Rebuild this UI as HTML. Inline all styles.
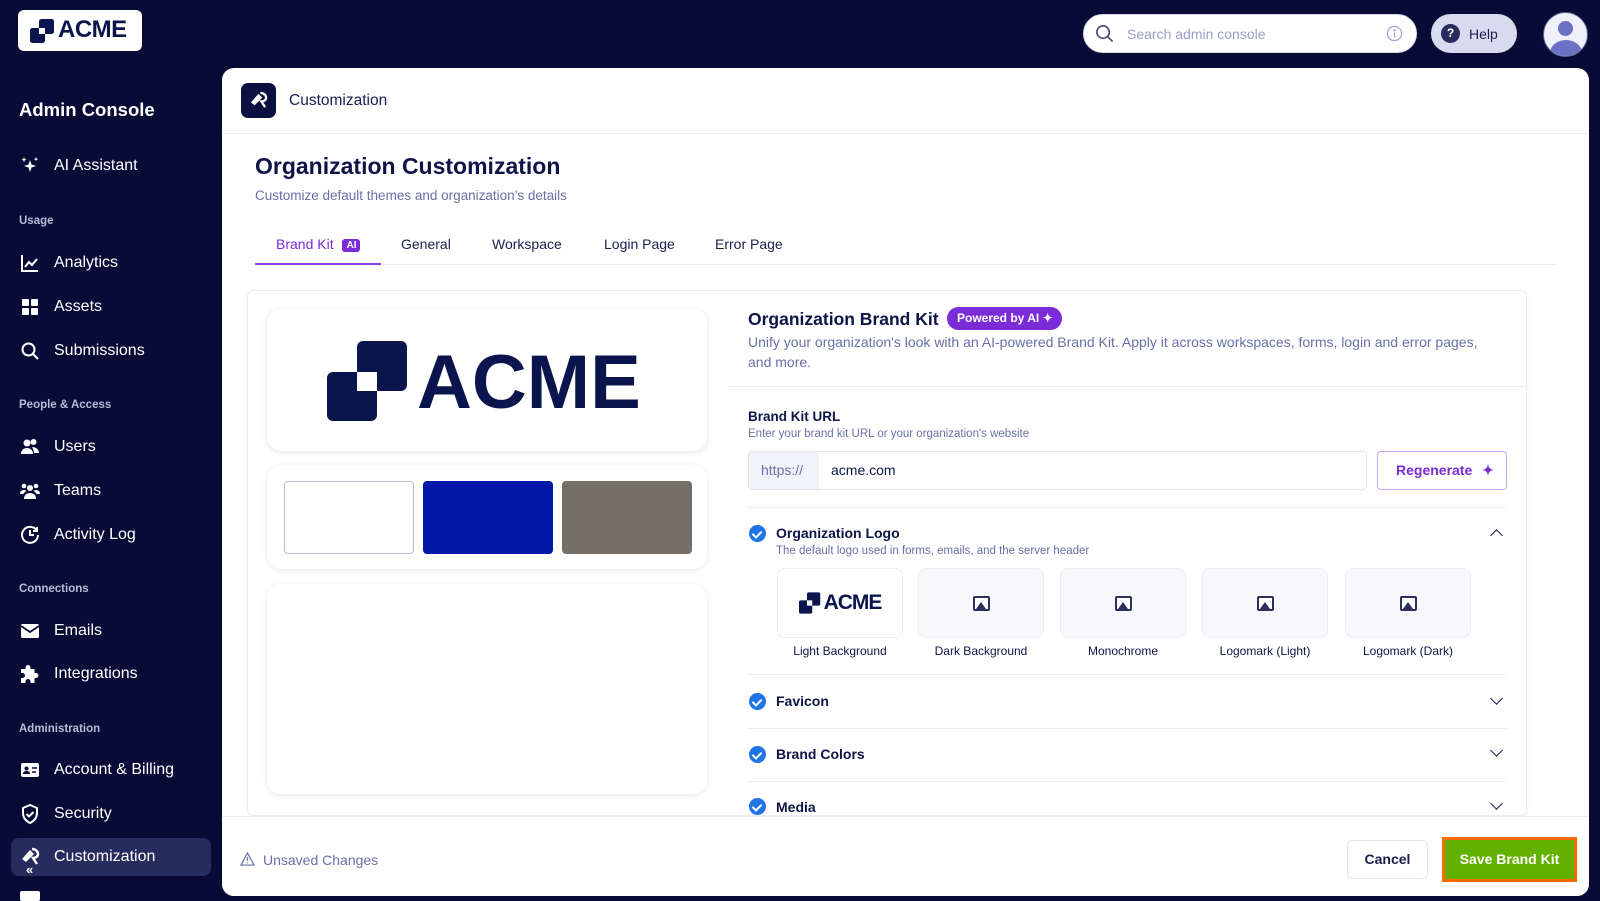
<!DOCTYPE html>
<html><head><meta charset="utf-8"><style>
*{box-sizing:border-box;margin:0;padding:0}
body{width:1600px;height:898px;overflow:hidden;background:#070b36;font-family:"Liberation Sans",sans-serif;position:relative;color:#0e1447}
.a{position:absolute}
.nav{position:absolute;left:20px;color:#fff;font-size:16px;display:flex;align-items:center}
.nav svg{width:20px;height:20px;margin-right:14px}
.sec{position:absolute;left:19px;color:#b9bcd6;font-size:11.5px;font-weight:bold}
.tab{position:absolute;top:236px;font-size:14px;color:#1a1f4e}
.hr{position:absolute;height:1px;background:#ececf4}
.chk{position:absolute;left:749px;width:17px;height:17px;border-radius:50%;background:#1f74e6}
.chk:after{content:"";position:absolute;left:5px;top:3.5px;width:4px;height:7px;border:solid #fff;border-width:0 2px 2px 0;transform:rotate(45deg)}
.sh{position:absolute;left:776px;font-size:14px;font-weight:bold;color:#0e1447}
.chev{position:absolute;left:1492px;width:9px;height:9px;border:solid #1a1f4e;border-width:0 1.6px 1.6px 0;transform:rotate(45deg)}
.tile{position:absolute;top:568px;width:126px;height:70px;border:1px solid #eceef6;border-radius:8px;background:#f8f8fc;display:flex;align-items:center;justify-content:center}
.tl{position:absolute;top:644px;width:126px;text-align:center;font-size:12px;color:#0e1447}
.img{width:17px;height:15px;border:2px solid #2a2f5e;border-radius:2px;position:relative;background:#fff}
.img:after{content:"";position:absolute;left:1px;bottom:0;border-left:5px solid transparent;border-right:5px solid transparent;border-bottom:7px solid #2a2f5e}
</style></head><body>
<div class="a" style="left:18px;top:10px;width:124px;height:41px;background:#fff;border-radius:6px"></div>
<svg class="a" style="left:30px;top:19px" width="26" height="24" viewBox="0 0 26 24"><rect x="9" y="0" width="15" height="15" rx="2.5" fill="#0b154d"/><rect x="0" y="9" width="15" height="15" rx="2.5" fill="#0b154d"/><rect x="9" y="9" width="6" height="6" fill="#fff"/></svg>
<div class="a" style="left:58px;top:16px;font-size:24px;font-weight:bold;color:#0b154d;letter-spacing:-0.5px">ACME</div>

<div class="a" style="left:19px;top:99px;color:#fff;font-size:18.5px;font-weight:bold">Admin Console</div>
<div class="nav" style="top:156px"><svg viewBox="0 0 20 20" fill="#fff"><path d="M10 4l1.5 4.5L16 10l-4.5 1.5L10 16l-1.5-4.5L4 10l4.5-1.5z"/><path d="M4 1l.7 2 2 .7-2 .7L4 6.4l-.7-2-2-.7 2-.7z"/><path d="M16 1l.6 1.5 1.5.6-1.5.6L16 5.2l-.6-1.5-1.5-.6 1.5-.6z"/></svg>AI Assistant</div>
<div class="sec" style="top:215px">Usage</div>
<div class="nav" style="top:253px"><svg viewBox="0 0 20 20" fill="none" stroke="#fff" stroke-width="2"><path d="M2 2v16h16M5 14l4-5 3 3 5-6"/></svg>Analytics</div>
<div class="nav" style="top:297px"><svg viewBox="0 0 20 20" fill="#fff"><rect x="2" y="2" width="7" height="7" rx="1"/><rect x="11" y="2" width="7" height="7" rx="1"/><rect x="2" y="11" width="7" height="7" rx="1"/><rect x="11" y="11" width="7" height="7" rx="1"/></svg>Assets</div>
<div class="nav" style="top:341px"><svg viewBox="0 0 20 20" fill="none" stroke="#fff" stroke-width="2"><circle cx="8.5" cy="8.5" r="6"/><path d="M13 13l5 5"/></svg>Submissions</div>
<div class="sec" style="top:399px">People &amp; Access</div>
<div class="nav" style="top:437px"><svg viewBox="0 0 20 20" fill="#fff"><circle cx="7" cy="6" r="3.5"/><circle cx="13.5" cy="5" r="3"/><path d="M1 17c0-4 3-6 6-6s6 2 6 6z"/><path d="M12 10c3 0 7 1.5 7 6h-5c0-2-1-4-2-6z"/></svg>Users</div>
<div class="nav" style="top:481px"><svg viewBox="0 0 20 20" fill="#fff"><circle cx="10" cy="7" r="3"/><circle cx="4" cy="5" r="2.3"/><circle cx="16" cy="5" r="2.3"/><path d="M4 18c0-4 2.5-6 6-6s6 2 6 6z"/><path d="M0 13c0-3 2-4 4-4 1.5 0 2 .5 2.5 1-2 1-3 2.5-3 3z"/><path d="M20 13c0-3-2-4-4-4-1.5 0-2 .5-2.5 1 2 1 3 2.5 3 3z"/></svg>Teams</div>
<div class="nav" style="top:525px"><svg viewBox="0 0 20 20" fill="none" stroke="#fff" stroke-width="2"><path d="M17 6A8 8 0 1 0 18 10"/><path d="M10 5v5h4"/><path d="M17 2v4h-4" /></svg>Activity Log</div>
<div class="sec" style="top:583px">Connections</div>
<div class="nav" style="top:621px"><svg viewBox="0 0 20 20" fill="#fff"><rect x="1" y="3" width="18" height="14" rx="1.5"/><path d="M1 5l9 6 9-6" stroke="#070b36" stroke-width="1.8" fill="none"/></svg>Emails</div>
<div class="nav" style="top:664px"><svg viewBox="0 0 20 20" fill="#fff"><path d="M8 1a2.5 2.5 0 0 1 2.5 2.5V5h4v4h1.5a2.5 2.5 0 0 1 0 5H14.5v5h-4v-1.5a2.5 2.5 0 0 0-5 0V19H1v-5h1.5a2.5 2.5 0 0 0 0-5H1V5h4.5V3.5A2.5 2.5 0 0 1 8 1z"/></svg>Integrations</div>
<div class="sec" style="top:723px">Administration</div>
<div class="nav" style="top:760px"><svg viewBox="0 0 20 20" fill="#fff"><rect x="1" y="3" width="18" height="14" rx="2"/><circle cx="6.5" cy="8.5" r="2" fill="#070b36"/><path d="M3 14c0-2 1.5-3 3.5-3s3.5 1 3.5 3z" fill="#070b36"/><path d="M12 8h5M12 12h4" stroke="#070b36" stroke-width="1.6"/></svg>Account &amp; Billing</div>
<div class="nav" style="top:804px"><svg viewBox="0 0 20 20" fill="none" stroke="#fff" stroke-width="2"><path d="M10 1l7 3v5c0 5-3 8-7 10-4-2-7-5-7-10V4z"/><path d="M6.5 10l2.5 2.5 4.5-4.5"/></svg>Security</div>
<div class="a" style="left:11px;top:838px;width:200px;height:38px;background:#272c5e;border-radius:8px"></div>
<div class="nav" style="top:847px"><svg viewBox="0 0 20 20" fill="#fff"><path d="M2 12L10 3l4 4-8 8z"/><path d="M12 2c3 0 6 2 6 5s-3 4-5 4l4 6" stroke="#fff" stroke-width="2.4" fill="none"/></svg>Customization</div>
<div class="a" style="left:26px;top:862px;color:#fff;font-size:13px;font-weight:bold">«</div>
<div class="a" style="left:20px;top:891px;width:20px;height:10px;background:#fff;border-radius:2px"></div>

<!-- top bar -->
<div class="a" style="left:1083px;top:14px;width:334px;height:39px;background:#fff;border-radius:20px;border:1px solid #d7d9ea"></div>
<svg class="a" style="left:1095px;top:24px" width="19" height="19" viewBox="0 0 20 20" fill="none" stroke="#4a4f80" stroke-width="1.8"><circle cx="8.5" cy="8.5" r="6.5"/><path d="M13.5 13.5l5 5"/></svg>
<div class="a" style="left:1127px;top:26px;font-size:14px;color:#9a9ec8">Search admin console</div>
<svg class="a" style="left:1386px;top:25px" width="17" height="17" viewBox="0 0 18 18" fill="none" stroke="#a0a4cc" stroke-width="1.3"><circle cx="9" cy="9" r="7.5"/><path d="M9 8v5"/><circle cx="9" cy="5.5" r=".6" fill="#a0a4cc"/></svg>
<div class="a" style="left:1431px;top:14px;width:86px;height:39px;background:#d8dbf0;border-radius:20px"></div>
<div class="a" style="left:1441px;top:24px;width:19px;height:19px;border-radius:50%;background:#262b5c;color:#fff;font-size:12px;font-weight:bold;text-align:center;line-height:19px">?</div>
<div class="a" style="left:1469px;top:26px;font-size:14px;color:#1a1f4e">Help</div>
<div class="a" style="left:1543px;top:12px;width:45px;height:45px;border-radius:50%;background:#eef0fa;overflow:hidden;border:1px solid #5a5f90">
<div class="a" style="left:14px;top:8px;width:15px;height:15px;border-radius:50%;background:#6c71c4"></div>
<div class="a" style="left:6px;top:27px;width:32px;height:26px;border-radius:50%;background:#6c71c4"></div></div>

<!-- main card -->
<div class="a" style="left:222px;top:68px;width:1367px;height:828px;background:#fff;border-radius:12px"></div>
<div class="a" style="left:241px;top:83px;width:35px;height:35px;border-radius:7px;background:#0b1040"></div>
<svg class="a" style="left:249px;top:91px" width="19" height="19" viewBox="0 0 20 20" fill="#fff"><path d="M2 12L10 3l4 4-8 8z"/><path d="M12 2c3 0 6 2 6 5s-3 4-5 4l4 6" stroke="#fff" stroke-width="2.4" fill="none"/></svg>
<div class="a" style="left:289px;top:92px;font-size:15.5px;color:#1a1f4e">Customization</div>
<div class="hr" style="left:222px;top:133px;width:1367px"></div>
<div class="a" style="left:255px;top:153px;font-size:23px;font-weight:bold;color:#0e1447">Organization Customization</div>
<div class="a" style="left:255px;top:188px;font-size:13.5px;color:#6b6fa8">Customize default themes and organization’s details</div>
<div class="tab" style="left:276px;color:#7b2bd8">Brand Kit <span style="display:inline-block;background:#7b2bd8;color:#fff;font-size:10px;font-weight:bold;padding:1px 4px;border-radius:3px;margin-left:5px;vertical-align:1px">AI</span></div>
<div class="tab" style="left:401px">General</div>
<div class="tab" style="left:492px">Workspace</div>
<div class="tab" style="left:604px">Login Page</div>
<div class="tab" style="left:715px">Error Page</div>
<div class="hr" style="left:255px;top:264px;width:1302px"></div>
<div class="a" style="left:255px;top:263px;width:126px;height:2px;background:#8a3ff0"></div>

<!-- panel -->
<div class="a" style="left:247px;top:290px;width:1280px;height:526px;border:1px solid #ececf4;border-radius:6px;box-shadow:0 1px 3px rgba(0,0,0,.06)"></div>
<div class="a" style="left:267px;top:309px;width:440px;height:142px;border-radius:14px;box-shadow:0 1px 6px rgba(20,20,80,.12)"></div>
<svg class="a" style="left:327px;top:341px" width="81" height="80" viewBox="0 0 81 80"><rect x="30" y="0" width="50" height="50" rx="6" fill="#0b154d"/><rect x="0" y="31" width="50" height="49" rx="6" fill="#0b154d"/><rect x="30" y="31" width="20" height="19" fill="#fff"/></svg>
<div class="a" style="left:417px;top:339px;font-size:76px;font-weight:bold;color:#0b154d;letter-spacing:0;line-height:88px">ACME</div>
<div class="a" style="left:267px;top:465px;width:440px;height:104px;border-radius:14px;box-shadow:0 1px 6px rgba(20,20,80,.1)"></div>
<div class="a" style="left:284px;top:481px;width:130px;height:73px;border:1px solid #b9bbe0;border-radius:4px;background:#fff"></div>
<div class="a" style="left:423px;top:481px;width:130px;height:73px;border-radius:4px;background:#0318a8"></div>
<div class="a" style="left:562px;top:481px;width:130px;height:73px;border-radius:4px;background:#756f68"></div>
<div class="a" style="left:267px;top:584px;width:440px;height:210px;border-radius:14px;box-shadow:0 1px 6px rgba(20,20,80,.1)"></div>

<div class="a" style="left:748px;top:309px;font-size:17.5px;font-weight:bold;color:#0e1447">Organization Brand Kit</div>
<div class="a" style="left:947px;top:307px;width:115px;height:23px;border-radius:12px;background:#7b2bd8;color:#fff;font-size:12px;font-weight:bold;line-height:23px;padding-left:10px">Powered by AI ✦</div>
<div class="a" style="left:748px;top:332px;width:735px;font-size:14px;line-height:20px;color:#6b6fa8">Unify your organization's look with an AI-powered Brand Kit. Apply it across workspaces, forms, login and error pages, and more.</div>
<div class="hr" style="left:728px;top:386px;width:799px"></div>
<div class="a" style="left:748px;top:409px;font-size:13.5px;font-weight:bold">Brand Kit URL</div>
<div class="a" style="left:748px;top:428px;font-size:11.5px;color:#6b6fa8">Enter your brand kit URL or your organization's website</div>
<div class="a" style="left:748px;top:451px;width:619px;height:39px;border:1px solid #e3e4f0;border-radius:4px;overflow:hidden"><div style="width:70px;height:100%;background:#f2f3fa;color:#6b6fa8;font-size:14px;line-height:37px;padding-left:12px">https://</div></div>
<div class="a" style="left:831px;top:462px;font-size:14px;color:#0e1447">acme.com</div>
<div class="a" style="left:1377px;top:451px;width:130px;height:39px;border:1px solid #c6a6f2;border-radius:4px;color:#7b2bd8;font-size:14px;font-weight:bold;line-height:37px;padding-left:18px">Regenerate <span style="margin-left:6px">✦</span></div>
<div class="hr" style="left:748px;top:507px;width:759px"></div>
<div class="chk" style="top:525px"></div>
<div class="sh" style="top:525px">Organization Logo</div>
<div class="a" style="left:776px;top:545px;font-size:11.5px;color:#6b6fa8">The default logo used in forms, emails, and the server header</div>
<div class="a" style="left:1492px;top:531px;width:9px;height:9px;border:solid #1a1f4e;border-width:1.6px 0 0 1.6px;transform:rotate(45deg)"></div>
<div class="tile" style="left:777px;background:#fff"><svg width="23" height="22" viewBox="0 0 26 24"><rect x="9" y="0" width="15" height="15" rx="2" fill="#0b154d"/><rect x="0" y="9" width="15" height="15" rx="2" fill="#0b154d"/><rect x="9" y="9" width="6" height="6" fill="#fff"/></svg><span style="font-size:21px;font-weight:bold;color:#0b154d;margin-left:2px;letter-spacing:-1px">ACME</span></div>
<div class="tile" style="left:918px"><div class="img"></div></div>
<div class="tile" style="left:1060px"><div class="img"></div></div>
<div class="tile" style="left:1202px"><div class="img"></div></div>
<div class="tile" style="left:1345px"><div class="img"></div></div>
<div class="tl" style="left:777px">Light Background</div>
<div class="tl" style="left:918px">Dark Background</div>
<div class="tl" style="left:1060px">Monochrome</div>
<div class="tl" style="left:1202px">Logomark (Light)</div>
<div class="tl" style="left:1345px">Logomark (Dark)</div>
<div class="hr" style="left:748px;top:674px;width:759px"></div>
<div class="chk" style="top:693px"></div><div class="sh" style="top:693px">Favicon</div><div class="chev" style="top:694px"></div>
<div class="hr" style="left:748px;top:728px;width:759px"></div>
<div class="chk" style="top:746px"></div><div class="sh" style="top:746px">Brand Colors</div><div class="chev" style="top:746px"></div>
<div class="hr" style="left:748px;top:781px;width:759px"></div>
<div class="chk" style="top:798px"></div><div class="sh" style="top:799px">Media</div><div class="chev" style="top:799px"></div>

<!-- footer -->
<div class="a" style="left:222px;top:816px;width:1367px;height:80px;background:#fff;border-top:1px solid #ececf4;border-radius:0 0 12px 12px"></div>
<svg class="a" style="left:240px;top:852px" width="15" height="14" viewBox="0 0 16 15" fill="none" stroke="#6b6fa8" stroke-width="1.3"><path d="M8 1L15 14H1z"/><path d="M8 5.5v4M8 11.3v1"/></svg>
<div class="a" style="left:263px;top:852px;font-size:14px;color:#6b6fa8">Unsaved Changes</div>
<div class="a" style="left:1347px;top:840px;width:81px;height:39px;border:1px solid #dfe0ee;border-radius:5px;font-size:14px;font-weight:bold;color:#1a1f4e;text-align:center;line-height:37px">Cancel</div>
<div class="a" style="left:1442px;top:837px;width:135px;height:45px;background:#62b000;border:3px solid #ff6a00;color:#fff;font-size:14px;font-weight:bold;text-align:center;line-height:39px">Save Brand Kit</div>
</body></html>
